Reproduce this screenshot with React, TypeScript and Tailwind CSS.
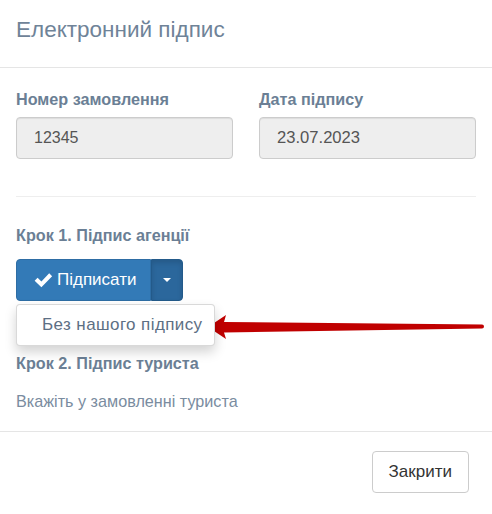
import React from "react";

// Модальне вікно "Електронний підпис"
export default function App() {
  return (
    <div className="relative w-[492px] h-[514px] bg-white font-['Liberation_Sans',Arial,sans-serif] text-[16px] text-[#333]">
      {/* шапка */}
      <div className="h-[68px] border-b border-[#e5e5e5] px-4 pb-[6px] flex items-center">
        <h4 className="text-[22.5px] text-[#6f8398] leading-none">Електронний підпис</h4>
      </div>

      {/* тіло */}
      <div className="px-4 pt-[21px] pb-[20px] border-b border-[#e5e5e5]">
        <div className="grid grid-cols-2 gap-[26px]">
          <div>
            <label className="block font-bold text-[#6b7f95] text-[16.2px] leading-5 mb-2">Номер замовлення</label>
            <div className="h-[42px] rounded border border-[#ccc] bg-[#eee] flex items-center px-[17px] text-[#555] shadow-[inset_0_1px_1px_rgba(0,0,0,0.075)]">12345</div>
          </div>
          <div>
            <label className="block font-bold text-[#6b7f95] text-[16.2px] leading-5 mb-2">Дата підпису</label>
            <div className="h-[42px] rounded border border-[#ccc] bg-[#eee] flex items-center px-[17px] text-[16.6px] text-[#555] shadow-[inset_0_1px_1px_rgba(0,0,0,0.075)]">23.07.2023</div>
          </div>
        </div>

        <hr className="mt-[37px] border-t border-[#eee]" />

        <p className="mt-[28px] font-bold text-[#6b7f95] text-[16.2px] leading-5">Крок 1. Підпис агенції</p>

        <div className="relative mt-[14px] flex w-fit">
          <button className="h-[42px] flex items-center gap-1 pl-[17px] pr-[14px] bg-[#337ab7] text-white text-[17px] rounded-l border border-[#2e6da4]">
            <svg width="19" height="16" viewBox="0 0 18 15">
              <path d="M0.6 8.2 L3.4 5.4 L7 9 L14.4 1.2 L17.2 4 L7 14.4 Z" fill="white" />
            </svg>
            Підписати
          </button>
          <button className="h-[42px] w-[32px] flex items-center justify-center bg-[#2b679c] border border-[#235a8a] rounded-r shadow-[inset_0_3px_5px_rgba(0,0,0,0.125)]">
            <span className="w-0 h-0 border-x-[4px] border-x-transparent border-t-[4px] border-t-white" />
          </button>

          {/* випадаюче меню */}
          <div className="absolute left-0 top-[45px] w-[199px] h-[42px] bg-white border border-[rgba(0,0,0,0.15)] rounded shadow-[0_6px_12px_rgba(0,0,0,0.175)] flex items-center pl-[25px] text-[17px] tracking-[0.4px] text-[#5d6f84] z-10">
            Без нашого підпису
          </div>
        </div>

        <p className="mt-[52px] font-bold text-[#6b7f95] text-[16.2px] leading-5">Крок 2. Підпис туриста</p>
        <p className="mt-[18px] text-[#7a8ca0] text-[16.2px] leading-5">Вкажіть у замовленні туриста</p>
      </div>

      {/* підвал */}
      <div className="px-[23px] pt-[19px] flex justify-end">
        <button className="h-[42px] px-[16px] border border-[#ccc] rounded bg-white text-[#333] text-[17px]">Закрити</button>
      </div>

      {/* червона стрілка */}
      <svg className="absolute left-0 top-0 pointer-events-none" width="492" height="514">
        <path
          d="M208 327 L226 315 L224 322 L482 324.5 A2 2 0 0 1 482 328.5 L224 332.5 L226 339 Z"
          fill="#c00000"
        />
      </svg>
    </div>
  );
}
